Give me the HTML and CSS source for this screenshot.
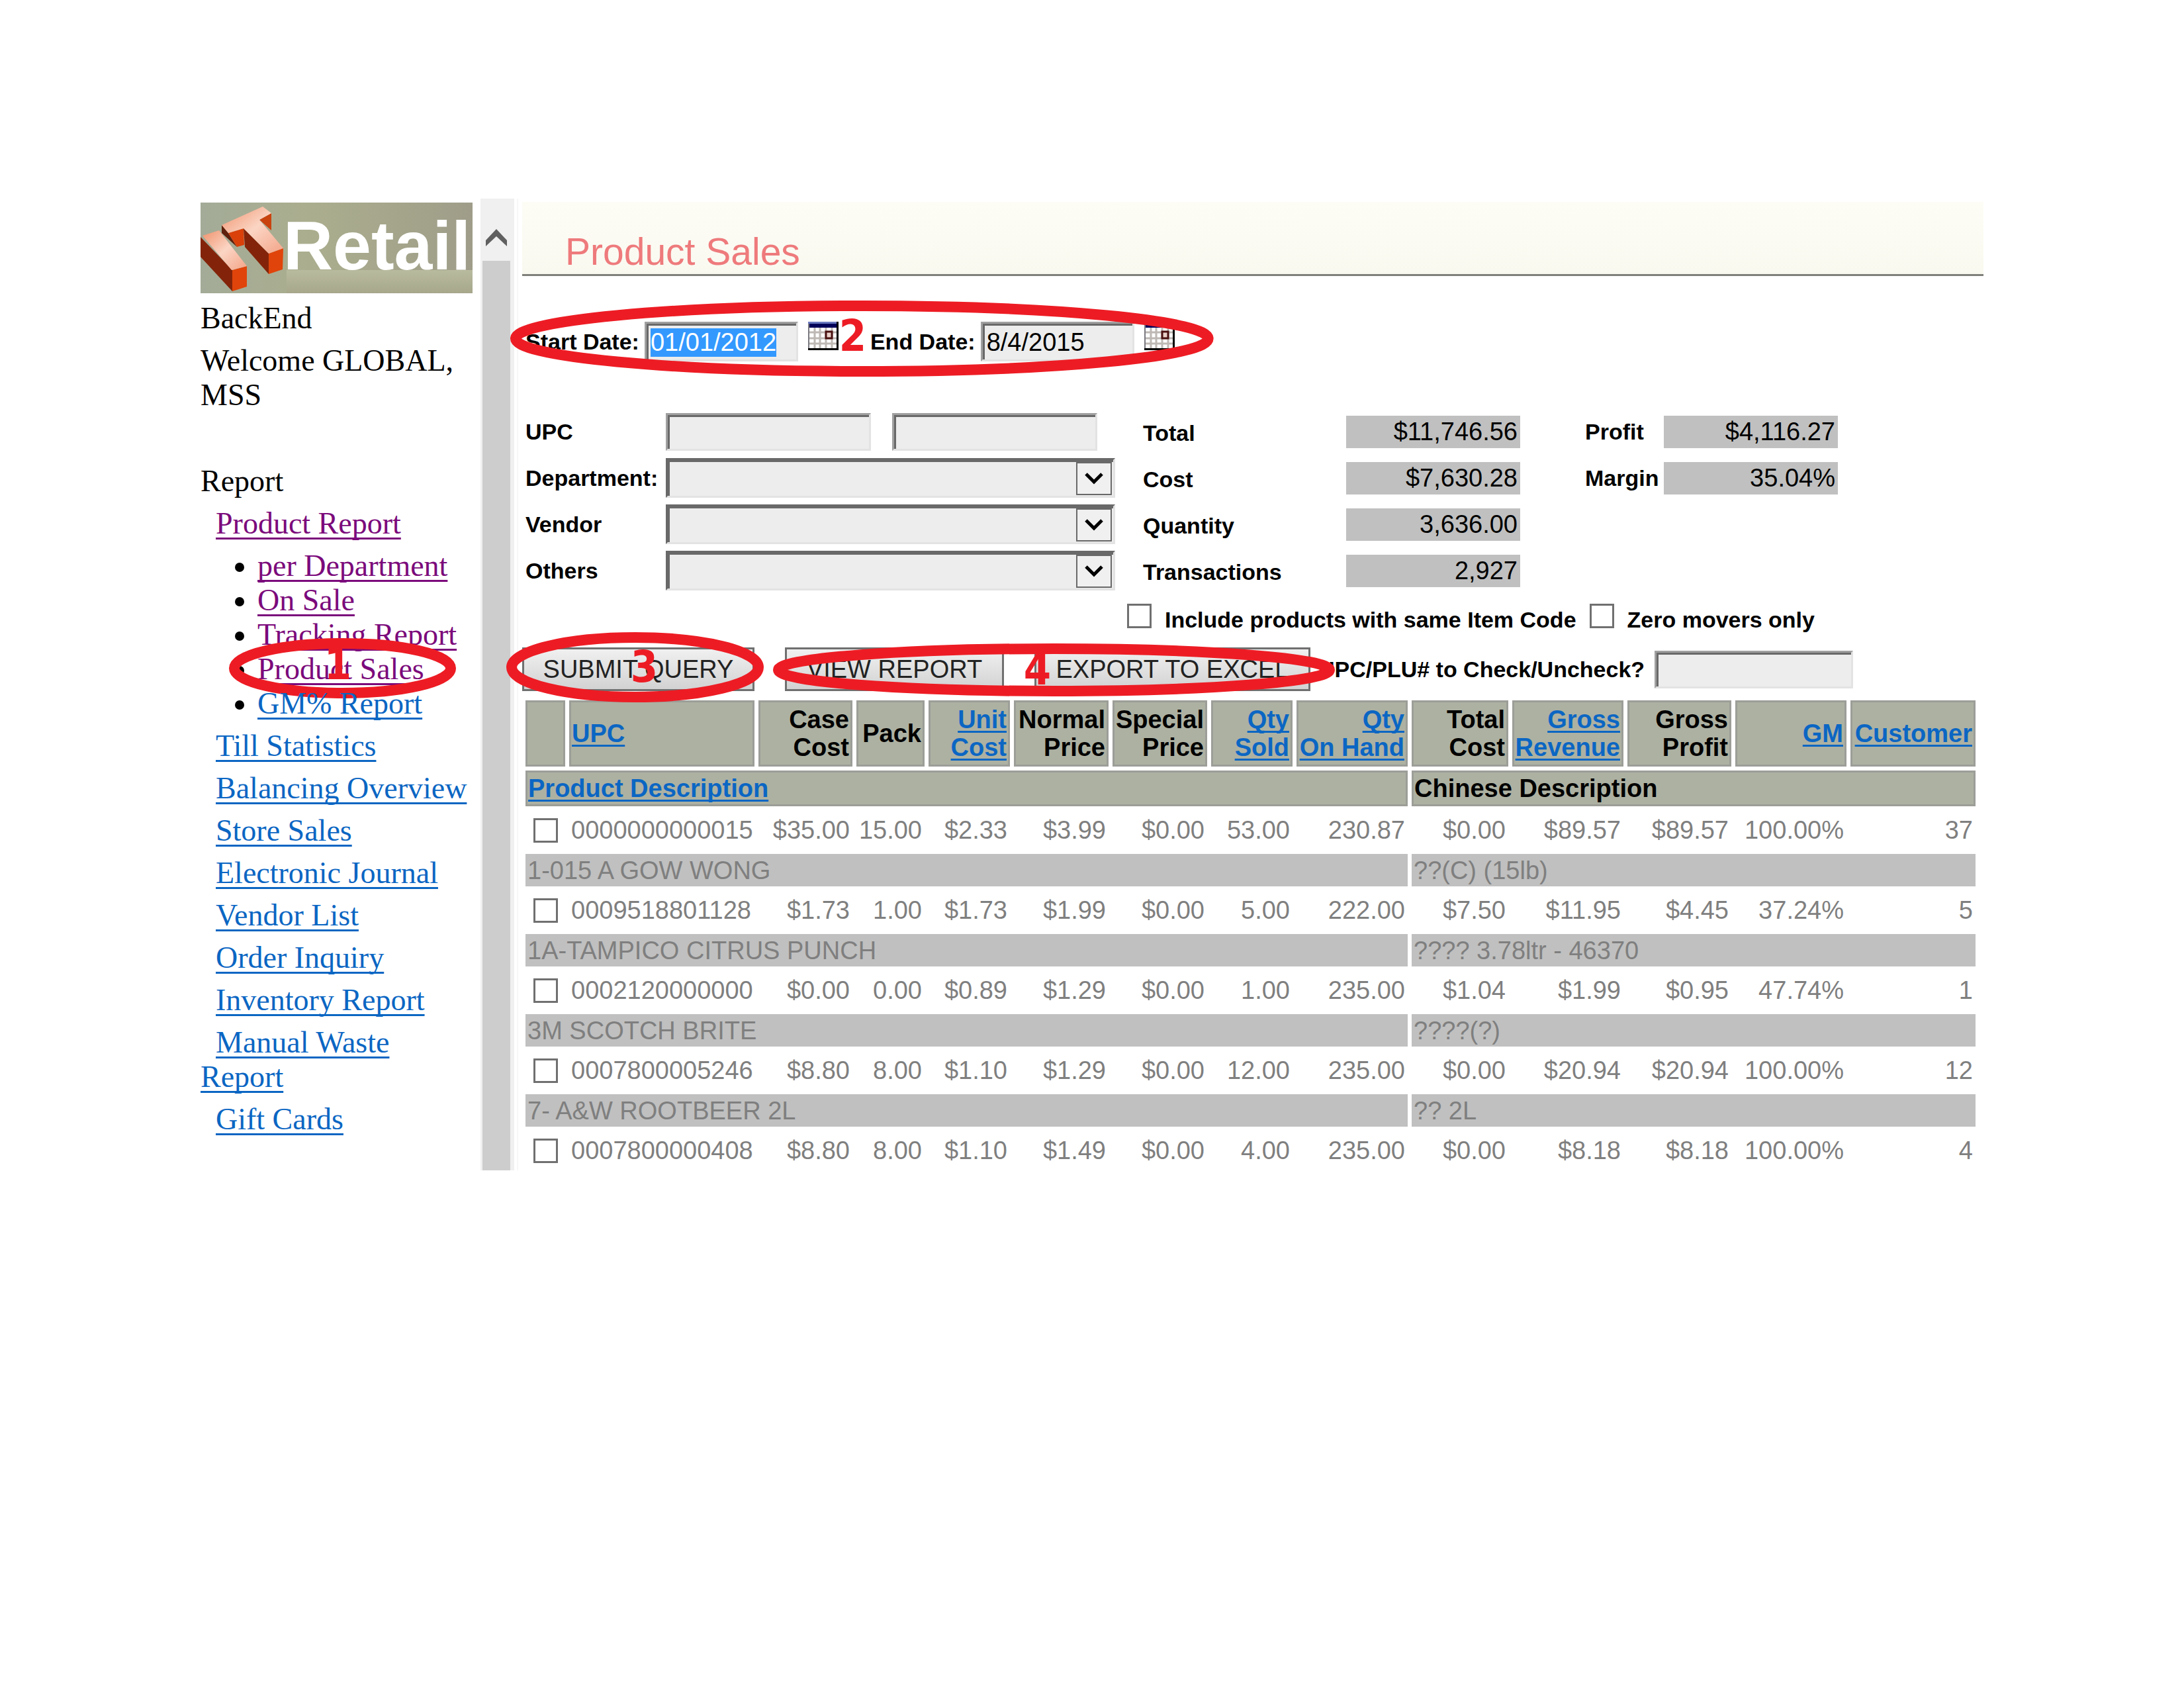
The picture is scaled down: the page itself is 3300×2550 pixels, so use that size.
FILE: index.html
```
<!DOCTYPE html>
<html lang="en">
<head>
  <meta charset="utf-8">
  <title>Product Sales</title>
  <link rel="stylesheet" href="styles.css">
</head>
<body>
  <div class="page">
    <nav class="sidebar">
      <svg class="logo" viewBox="0 0 411 137" role="img" aria-label="IT Retail">
        <defs>
          <linearGradient id="logoBg" x1="0" y1="0" x2="1" y2="0">
            <stop offset="0" stop-color="#a3ab98"/>
            <stop offset="0.4" stop-color="#abae8e"/>
            <stop offset="1" stop-color="#9f9d89"/>
          </linearGradient>
          <linearGradient id="logoFloor" x1="0" y1="0" x2="0" y2="1">
            <stop offset="0" stop-color="#b9bb9f"/>
            <stop offset="1" stop-color="#a6a78b"/>
          </linearGradient>
          <linearGradient id="logoTop" x1="0" y1="0" x2="1" y2="1">
            <stop offset="0" stop-color="#f0926c"/>
            <stop offset="0.5" stop-color="#fbd5c4"/>
            <stop offset="1" stop-color="#f3a488"/>
          </linearGradient>
        </defs>
        <rect width="411" height="137" fill="url(#logoBg)"/>
        <rect x="130" y="102" width="281" height="35" fill="url(#logoFloor)"/>
        <polygon points="32,34 42,46 55,67 32,46" fill="#5e1f0c"/>
        <polygon points="42,46 65,39 66,64 55,67" fill="#d9400a"/>
        <polygon points="89,26 107,16 107,42" fill="#c9430f"/>
        <polygon points="65,39 103,77 103,108 67,67" fill="#83240a"/>
        <polygon points="103,77 125,69 124,101 103,108" fill="#e0440a"/>
        <polygon points="32,34 94,6 107,16 89,26 125,69 103,77 65,39 42,46" fill="url(#logoTop)"/>
        <polygon points="0,52 48,102 48,134 0,82" fill="#83240a"/>
        <polygon points="48,102 70,96 70,127 48,134" fill="#e0440a"/>
        <polygon points="3,50 28,42 70,96 47,102" fill="url(#logoTop)"/>
        <text x="125" y="101" class="logo-text">Retail</text>
      </svg>

      <p>BackEnd</p>
      <p class="welcome">Welcome GLOBAL, MSS</p>
      <p>Report</p>
      <p class="item"><a href="#" class="visited">Product Report</a></p>
      <ul>
        <li><a href="#" class="visited">per Department</a></li>
        <li><a href="#" class="visited">On Sale</a></li>
        <li><a href="#" class="visited">Tracking Report</a></li>
        <li>
          <a href="#" class="visited">Product Sales</a>
          <span class="mark mark-1"><svg><ellipse cx="50%" cy="50%" rx="50%" ry="50%"/></svg>1</span>
        </li>
        <li><a href="#">GM% Report</a></li>
      </ul>
      <p class="item"><a href="#">Till Statistics</a></p>
      <p class="item"><a href="#">Balancing Overview</a></p>
      <p class="item"><a href="#">Store Sales</a></p>
      <p class="item"><a href="#">Electronic Journal</a></p>
      <p class="item"><a href="#">Vendor List</a></p>
      <p class="item"><a href="#">Order Inquiry</a></p>
      <p class="item"><a href="#">Inventory Report</a></p>
      <p class="item"><a href="#">Manual Waste Report</a></p>
      <p class="item"><a href="#">Gift Cards</a></p>
    </nav>

    <div class="scrollbar">
      <svg class="scroll-up" viewBox="0 0 32 26"><path d="M0 17 L16 0 L32 17 V26 L16 11 L0 26 Z" fill="#606060"/></svg>
      <div class="thumb"></div>
    </div>

    <main>
      <header>
        <h1>Product Sales</h1>
      </header>

      <form class="filters">
        <div class="dates">
          <label for="startDate">Start Date:</label>
          <input type="text" id="startDate" class="date" value="01/01/2012" autofocus>
          <button type="button" class="calendar" aria-label="Pick start date">
            <svg viewBox="0 0 46 43">
              <rect width="46" height="43" fill="#000"/>
              <rect width="43" height="40" fill="#7a7a80"/>
              <rect x="2" y="8" width="41" height="32" fill="#fff"/>
              <path d="M10 9V40M18 9V40M27 9V40M36 9V40M2 16H43M2 25H43M2 33H43" stroke="#bdb8b4" stroke-width="3"/>
              <rect width="43" height="3" fill="#6a7ac0"/>
              <rect x="2" y="3" width="41" height="6" fill="#00005a"/>
              <rect x="27" y="15" width="9" height="10" fill="#e8d0c8" stroke="#4a1010" stroke-width="3"/>
            </svg>
          </button>
          <label for="endDate" class="end-label">End Date:</label>
          <input type="text" id="endDate" class="date" value="8/4/2015">
          <button type="button" class="calendar" aria-label="Pick end date">
            <svg viewBox="0 0 46 43">
              <rect width="46" height="43" fill="#000"/>
              <rect width="43" height="40" fill="#7a7a80"/>
              <rect x="2" y="8" width="41" height="32" fill="#fff"/>
              <path d="M10 9V40M18 9V40M27 9V40M36 9V40M2 16H43M2 25H43M2 33H43" stroke="#bdb8b4" stroke-width="3"/>
              <rect width="43" height="3" fill="#6a7ac0"/>
              <rect x="2" y="3" width="41" height="6" fill="#00005a"/>
              <rect x="27" y="15" width="9" height="10" fill="#e8d0c8" stroke="#4a1010" stroke-width="3"/>
            </svg>
          </button>
          <span class="mark mark-2"><svg><ellipse cx="50%" cy="50%" rx="50%" ry="50%"/></svg>2</span>
        </div>

        <div class="grid">
          <label for="upcFrom">UPC</label>
          <div class="upc-range">
            <input type="text" id="upcFrom">
            <input type="text" id="upcTo" aria-label="UPC to">
          </div>
          <span class="name total">Total</span>
          <output>$11,746.56</output>
          <span class="name profit">Profit</span>
          <output>$4,116.27</output>

          <label for="department">Department:</label>
          <div class="select">
            <select id="department"><option></option></select>
            <svg viewBox="0 0 28 20"><path d="M2 3 L14 15 L26 3" fill="none" stroke="#000" stroke-width="5"/></svg>
          </div>
          <span class="name total">Cost</span>
          <output>$7,630.28</output>
          <span class="name profit">Margin</span>
          <output>35.04%</output>

          <label for="vendor">Vendor</label>
          <div class="select">
            <select id="vendor"><option></option></select>
            <svg viewBox="0 0 28 20"><path d="M2 3 L14 15 L26 3" fill="none" stroke="#000" stroke-width="5"/></svg>
          </div>
          <span class="name total">Quantity</span>
          <output>3,636.00</output>

          <label for="others">Others</label>
          <div class="select">
            <select id="others"><option></option></select>
            <svg viewBox="0 0 28 20"><path d="M2 3 L14 15 L26 3" fill="none" stroke="#000" stroke-width="5"/></svg>
          </div>
          <span class="name total">Transactions</span>
          <output>2,927</output>
        </div>

        <div class="options">
          <input type="checkbox" id="sameCode">
          <label for="sameCode">Include products with same Item Code</label>
          <input type="checkbox" id="zeroMovers">
          <label for="zeroMovers">Zero movers only</label>
        </div>

        <div class="actions">
          <div class="group">
            <button type="button" class="btn submit">SUBMIT QUERY</button>
            <span class="mark mark-3"><svg><ellipse cx="50%" cy="50%" rx="50%" ry="50%"/></svg>3</span>
          </div>
          <div class="group">
            <button type="button" class="btn view">VIEW REPORT</button>
            <button type="button" class="btn export">EXPORT TO EXCEL</button>
            <span class="mark mark-4"><svg><ellipse cx="50%" cy="50%" rx="50%" ry="50%"/></svg>4</span>
          </div>
          <div class="check-upc">
            <label for="plu">UPC/PLU# to Check/Uncheck?</label>
            <input type="text" id="plu">
          </div>
        </div>
      </form>

      <table>
        <colgroup>
          <col class="c-check"><col class="c-upc"><col class="c-case"><col class="c-pack"><col class="c-unit">
          <col class="c-price"><col class="c-price"><col class="c-unit"><col class="c-wide"><col class="c-total">
          <col class="c-wide"><col class="c-profit"><col class="c-wide"><col class="c-customer">
        </colgroup>
        <thead>
          <tr class="head">
            <th></th>
            <th class="left"><a href="#">UPC</a></th>
            <th>Case<br>Cost</th>
            <th>Pack</th>
            <th><a href="#">Unit<br>Cost</a></th>
            <th>Normal<br>Price</th>
            <th>Special<br>Price</th>
            <th><a href="#">Qty<br>Sold</a></th>
            <th><a href="#">Qty<br>On Hand</a></th>
            <th>Total<br>Cost</th>
            <th><a href="#">Gross<br>Revenue</a></th>
            <th>Gross<br>Profit</th>
            <th><a href="#">GM</a></th>
            <th><a href="#">Customer</a></th>
          </tr>
          <tr class="subhead">
            <th colspan="9" class="left"><a href="#">Product Description</a></th>
            <th colspan="5" class="left">Chinese Description</th>
          </tr>
        </thead>
        <tbody>
          <tr class="data">
            <td><input type="checkbox" aria-label="0000000000015"></td>
            <td class="left">0000000000015</td><td>$35.00</td><td>15.00</td><td>$2.33</td><td>$3.99</td><td>$0.00</td><td>53.00</td><td>230.87</td><td>$0.00</td><td>$89.57</td><td>$89.57</td><td>100.00%</td><td>37</td>
          </tr>
          <tr class="desc"><td colspan="9">1-015 A GOW WONG</td><td colspan="5">??(C) (15lb)</td></tr>
          <tr class="data">
            <td><input type="checkbox" aria-label="0009518801128"></td>
            <td class="left">0009518801128</td><td>$1.73</td><td>1.00</td><td>$1.73</td><td>$1.99</td><td>$0.00</td><td>5.00</td><td>222.00</td><td>$7.50</td><td>$11.95</td><td>$4.45</td><td>37.24%</td><td>5</td>
          </tr>
          <tr class="desc"><td colspan="9">1A-TAMPICO CITRUS PUNCH</td><td colspan="5">???? 3.78ltr - 46370</td></tr>
          <tr class="data">
            <td><input type="checkbox" aria-label="0002120000000"></td>
            <td class="left">0002120000000</td><td>$0.00</td><td>0.00</td><td>$0.89</td><td>$1.29</td><td>$0.00</td><td>1.00</td><td>235.00</td><td>$1.04</td><td>$1.99</td><td>$0.95</td><td>47.74%</td><td>1</td>
          </tr>
          <tr class="desc"><td colspan="9">3M SCOTCH BRITE</td><td colspan="5">????(?)</td></tr>
          <tr class="data">
            <td><input type="checkbox" aria-label="0007800005246"></td>
            <td class="left">0007800005246</td><td>$8.80</td><td>8.00</td><td>$1.10</td><td>$1.29</td><td>$0.00</td><td>12.00</td><td>235.00</td><td>$0.00</td><td>$20.94</td><td>$20.94</td><td>100.00%</td><td>12</td>
          </tr>
          <tr class="desc"><td colspan="9">7- A&amp;W ROOTBEER 2L</td><td colspan="5">?? 2L</td></tr>
          <tr class="data">
            <td><input type="checkbox" aria-label="0007800000408"></td>
            <td class="left">0007800000408</td><td>$8.80</td><td>8.00</td><td>$1.10</td><td>$1.49</td><td>$0.00</td><td>4.00</td><td>235.00</td><td>$0.00</td><td>$8.18</td><td>$8.18</td><td>100.00%</td><td>4</td>
          </tr>
        </tbody>
      </table>
    </main>
  </div>

  <script>
    // start with the first date selected so it can be typed over
    const startDate = document.getElementById('startDate');
    startDate.focus();
    startDate.select();
  </script>
</body>
</html>
```
FILE: styles.css
```
* {
  box-sizing: border-box;
}
body {
  margin: 0;
  background: #fff;
  color: #000;
  font-family: "Liberation Sans", Arial, sans-serif;
  font-size: 38px;
}
a {
  color: #0b66c3;
  text-decoration: underline;
  text-decoration-thickness: 3px;
  text-decoration-skip-ink: none;
  text-underline-offset: 4px;
}
a.visited {
  color: #7b0a7b;
}
.page {
  display: flex;
  padding: 300px 303px;
}

/* left menu */
.sidebar {
  flex: none;
  width: 423px;
  padding: 6px 12px 0 0;
  font-family: "Liberation Serif", "Times New Roman", serif;
  font-size: 46px;
  line-height: 52px;
}
.sidebar a {
  text-underline-offset: 6px;
}
.logo {
  display: block;
  width: 100%;
  margin-bottom: 12px;
}
.logo-text {
  font-family: "Liberation Sans", Arial, sans-serif;
  font-weight: bold;
  font-size: 104px;
  fill: #fff;
}
.sidebar p {
  margin: 0 0 12px;
}
.sidebar .welcome {
  margin-bottom: 78px;
}
.sidebar .item {
  text-indent: 23px;
}
.sidebar ul {
  margin: 0 0 12px;
  padding-left: 86px;
}
.sidebar li {
  position: relative;
  line-height: 52px;
}

/* frame scrollbar */
.scrollbar {
  flex: none;
  display: flex;
  flex-direction: column;
  width: 51px;
  margin-right: 12px;
  padding: 0 6px 0 3px;
  background: #f0f0f0;
  box-shadow: 4px 0 #fff, 6px 0 #f7f7f7;
}
.scroll-up {
  width: 32px;
  margin: 46px 5px 22px;
}
.thumb {
  flex: 1;
  background: #cdcdcd;
}

main {
  flex: 1;
  min-width: 0;
}
header {
  margin-top: 5px;
  padding: 45px 0 3px 65px;
  background: linear-gradient(#fdfdf6, #f9f9f0);
  border-bottom: 3px solid #80807a;
}
h1 {
  margin: 0;
  font-size: 57px;
  line-height: 61px;
  font-weight: normal;
  color: #ee7a7c;
}

/* query form */
.filters {
  padding-left: 5px;
}
.filters label,
.name {
  font-size: 34px;
  line-height: 38px;
  font-weight: bold;
  white-space: nowrap;
}
input[type="text"],
select {
  font: inherit;
  color: #000;
  background: #ededed;
  border: 3px solid #a0a0a0;
  border-right-color: #e3e3e3;
  border-bottom-color: #e3e3e3;
  border-radius: 0;
  box-shadow: inset 3px 3px #696969;
  outline: none;
}
input[type="text"] {
  width: 310px;
  height: 57px;
  padding: 3px 0 0 6px;
}
input[type="checkbox"] {
  appearance: none;
  flex: none;
  display: block;
  width: 37px;
  height: 37px;
  margin: 0;
  background: #fff;
  border: 3px solid #707070;
}
input::selection {
  background: #3399ff;
  color: #fff;
}
.dates {
  position: relative;
  display: inline-flex;
  align-items: center;
  margin: 69px 0 71px;
}
.dates input.date {
  width: 232px;
  height: 60px;
  margin: 0 15px 0 8px;
}
.end-label {
  margin-left: 48px;
}
.calendar {
  align-self: flex-start;
  width: 46px;
  height: 43px;
  padding: 0;
  border: none;
  background: none;
  cursor: pointer;
}
.calendar svg {
  display: block;
}
.grid {
  display: grid;
  grid-template-columns: 212px 679px 349px 263px 217px 263px;
  grid-auto-rows: 70px;
  align-items: center;
}
.grid label {
  grid-column: 1;
}
.name.total {
  padding: 4px 0 0 42px;
}
.name.profit {
  padding-left: 98px;
}
.upc-range {
  display: flex;
  gap: 32px;
}
.select {
  position: relative;
}
.select select {
  appearance: none;
  display: block;
  width: 100%;
  height: 60px;
  border-color: #696969 #e3e3e3 #e3e3e3 #696969;
}
.select svg {
  position: absolute;
  top: 6px;
  right: 5px;
  width: 54px;
  height: 50px;
  padding: 11px;
  background: #f0f0f0;
  border: 2px solid #696969;
  pointer-events: none;
}
output {
  height: 49px;
  padding-right: 4px;
  background: #c0c0c0;
  line-height: 49px;
  text-align: right;
}
.options {
  display: flex;
  padding: 15px 0 0 909px;
}
.options label {
  margin: 5px 20px;
}
.actions {
  display: flex;
  align-items: center;
  gap: 46px;
  margin: 18px 0 8px -5px;
}
.group {
  position: relative;
  display: flex;
  gap: 46px;
}
.btn {
  height: 66px;
  padding: 0;
  border: 3px solid #707070;
  background: linear-gradient(#f0f0f0, #d2d2d2);
  color: #222;
  font: inherit;
  white-space: nowrap;
}
.submit {
  width: 351px;
}
.view {
  width: 331px;
}
.export {
  width: 417px;
}
.check-upc {
  display: flex;
  align-items: center;
  gap: 15px;
  margin-left: -34px;
}
.check-upc input {
  width: 300px;
}

/* numbered red callouts */
.mark {
  position: absolute;
  display: flex;
  align-items: center;
  justify-content: center;
  color: #ed1c24;
  font-family: "DejaVu Sans Condensed", "DejaVu Sans", sans-serif;
  font-weight: bold;
  font-size: 66px;
  line-height: 60px;
  pointer-events: none;
}
.mark svg {
  position: absolute;
  top: 8px;
  left: 8px;
  width: calc(100% - 16px);
  height: calc(100% - 16px);
  overflow: visible;
}
.mark ellipse {
  fill: none;
  stroke: #ed1c24;
  stroke-width: 16px;
}
.mark-1 {
  left: -43px;
  top: -21px;
  width: 343px;
  height: 91px;
  padding: 0 14px 12px 0;
}
.mark-2 {
  inset: -32px -59px -23px -23px;
  padding: 0 28px 8px 0;
}
.mark-3 {
  inset: -23px -14px -17px -24px;
  padding-left: 28px;
}
.mark-4 {
  inset: -6px -37px -8px -18px;
  padding-right: 50px;
}

/* results */
table {
  width: calc(100% - 10px);
  margin: 0 0 -6px -1px;
  table-layout: fixed;
  border-collapse: separate;
  border-spacing: 6px;
  line-height: 42px;
}
.c-check { width: 60px; }
.c-upc { width: 280px; }
.c-case { width: 142px; }
.c-pack { width: 103px; }
.c-unit { width: 123px; }
.c-price { width: 143px; }
.c-wide { width: 168px; }
.c-total { width: 146px; }
.c-profit { width: 157px; }
.c-customer { width: 189px; }
th {
  padding: 1px 2px 1px 1px;
  background: #adb1a2;
  border: 3px solid #9c9e98;
  text-align: right;
  white-space: nowrap;
}
.head th {
  height: 100px;
}
.subhead th {
  height: 54px;
}
td {
  padding: 0 4px 0 3px;
  color: #7f7f7f;
  text-align: right;
  white-space: nowrap;
}
th.left,
td.left {
  text-align: left;
}
.data td {
  height: 60px;
}
.data td:first-child {
  padding-left: 12px;
}
.desc td {
  height: 49px;
  background: #c0c0c0;
  text-align: left;
}
```
